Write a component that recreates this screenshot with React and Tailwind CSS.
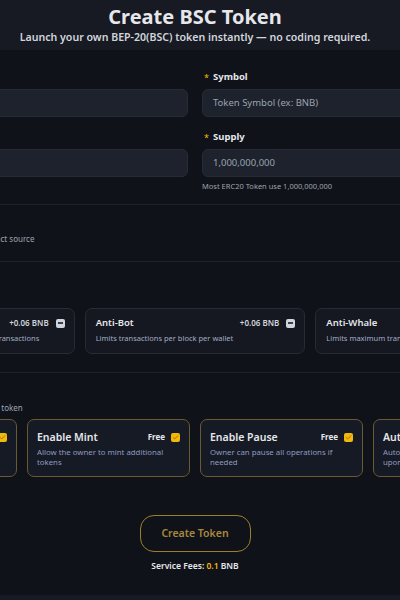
import { Check } from 'lucide-react';

const paidFeatures = [
  { title: 'Tax Fee', desc: "Adds a buy and sell fee on all token's transactions", price: '+0.06 BNB' },
  { title: 'Anti-Bot', desc: 'Limits transactions per block per wallet', price: '+0.06 BNB' },
  { title: 'Anti-Whale', desc: 'Limits maximum transaction amount per wallet', price: '+0.06 BNB' },
];

const freeFeatures = [
  { title: 'Enable Burn', desc: 'Allow holders to burn their own tokens' },
  { title: 'Enable Mint', desc: 'Allow the owner to mint additional tokens' },
  { title: 'Enable Pause', desc: 'Owner can pause all operations if needed' },
  { title: 'Auto Liquidity', desc: 'Automatically add liquidity to pool upon each transaction' },
];

const Field = ({ label, placeholder, hint }) => (
  <div className="flex flex-col">
    <div className="flex items-center gap-[4px] h-[14px] mb-[5px] pl-[2px]">
      <span className="text-[#f0b90b] text-[9px] leading-none">*</span>
      <span className="text-[9.5px] font-bold text-[#e5e7eb]">{label}</span>
    </div>
    <div className="h-[28px] rounded-[6px] bg-[#1d222d] border border-[#262b36] flex items-center px-[10px]">
      <span className="text-[9.5px] text-[#9ca3af]">{placeholder}</span>
    </div>
    {hint && <p className="text-[7.5px] leading-[11px] text-[#9ca3af] mt-[4px]">{hint}</p>}
  </div>
);

const Minus = () => (
  <span className="w-[9px] h-[9px] rounded-[2px] bg-[#d1d5db] flex items-center justify-center">
    <span className="w-[5px] h-[1.5px] bg-[#374151]" />
  </span>
);

const Tick = () => (
  <span className="w-[9px] h-[9px] rounded-[2px] bg-[#f0b90b] flex items-center justify-center">
    <Check size={7} strokeWidth={3} className="text-[#a16207]" />
  </span>
);

const Divider = () => <div className="h-px bg-[#1f222c]" />;

export default function App() {
  return (
    <div
      className="w-[400px] h-[600px] overflow-hidden bg-[#10121a]"
      style={{ fontFamily: '"Noto Sans", "Open Sans", sans-serif' }}
    >
      <div className="w-[682px] ml-[-146px] flex flex-col">
        {/* Header */}
        <div className="h-[50px] bg-[#171a23] flex flex-col items-center pt-[4px]">
          <h1 className="text-[20px] leading-[26px] font-bold text-[#e5e7eb]">Create BSC Token</h1>
          <p className="text-[10.6px] leading-[15px] font-semibold text-[#d1d5db]">
            Launch your own BEP-20(BSC) token instantly — no coding required.
          </p>
        </div>

        {/* Basic info */}
        <div className="grid grid-cols-2 gap-x-[14px] gap-y-[13px] pt-[20px]">
          <Field label="Name" placeholder="Token Name" />
          <Field label="Symbol" placeholder="Token Symbol (ex: BNB)" />
          <Field label="Decimals" placeholder="18" />
          <Field label="Supply" placeholder="1,000,000,000" hint="Most ERC20 Token use 1,000,000,000" />
        </div>

        <div className="mt-[12px]">
          <Divider />
        </div>

        {/* Verification */}
        <div className="h-[56px] flex flex-col justify-center pb-[4px]">
          <p className="text-[11px] font-bold text-[#e5e7eb] leading-[14px]">Verify</p>
          <p className="text-[8px] text-[#9ca3af] leading-[11px]">Automatically verify and publish contract source</p>
        </div>
        <Divider />

        {/* Paid features */}
        <div className="pt-[16px] pb-[18px]">
          <p className="text-[11px] font-bold text-[#e5e7eb] leading-[14px] mb-[16px]">Security</p>
          <div className="grid grid-cols-3 gap-[10px]">
            {paidFeatures.map((f) => (
              <div
                key={f.title}
                className="h-[46px] rounded-[7px] border border-[#272b36] bg-[#151821] pl-[10px] pr-[9px] pt-[7px] flex flex-col gap-[3px]"
              >
                <div className="flex items-center justify-between">
                  <span className="text-[9.5px] font-semibold text-[#e5e7eb] leading-[14px]">{f.title}</span>
                  <div className="flex items-center gap-[7px]">
                    <span className="text-[8px] font-semibold text-[#d1d5db]">{f.price}</span>
                    <Minus />
                  </div>
                </div>
                <p className="text-[7.5px] text-[#a3acc4] leading-[11px] whitespace-nowrap">{f.desc}</p>
              </div>
            ))}
          </div>
        </div>
        <Divider />

        {/* Free features */}
        <div className="pt-[14px]">
          <p className="text-[11px] font-bold text-[#e5e7eb] leading-[14px]">Features</p>
          <p className="text-[8px] text-[#9ca3af] leading-[11px] mt-[1px] mb-[6px]">Select which features to enable in your token</p>
          <div className="grid grid-cols-4 gap-[10px]">
            {freeFeatures.map((f) => (
              <div
                key={f.title}
                className="h-[58px] rounded-[7px] border border-[#6b5a30] bg-[#161a24] px-[9px] pt-[10px] flex flex-col gap-[3px]"
              >
                <div className="flex items-center justify-between">
                  <span className="text-[10.5px] font-semibold text-[#e5e7eb] leading-[14px]">{f.title}</span>
                  <div className="flex items-center gap-[6px]">
                    <span className="text-[8px] font-bold text-[#e5e7eb]">Free</span>
                    <Tick />
                  </div>
                </div>
                <p className="text-[7.8px] text-[#8f9bc0] leading-[10px] pr-[8px]">{f.desc}</p>
              </div>
            ))}
          </div>
        </div>

        {/* Submit */}
        <div className="flex flex-col items-center mt-[38px]">
          <button className="w-[111px] h-[37px] rounded-[14px] border-[1.5px] border-[#9c7f2a] text-[10.5px] font-semibold text-[#a8893a]">
            Create Token
          </button>
          <p className="mt-[8px] text-[8.5px] font-semibold text-[#e5e7eb]">
            Service Fees: <span className="text-[#f0b90b]">0.1</span> BNB
          </p>
        </div>

        <div className="mt-[22px] h-[20px] bg-[#171a23]" />
      </div>
    </div>
  );
}
